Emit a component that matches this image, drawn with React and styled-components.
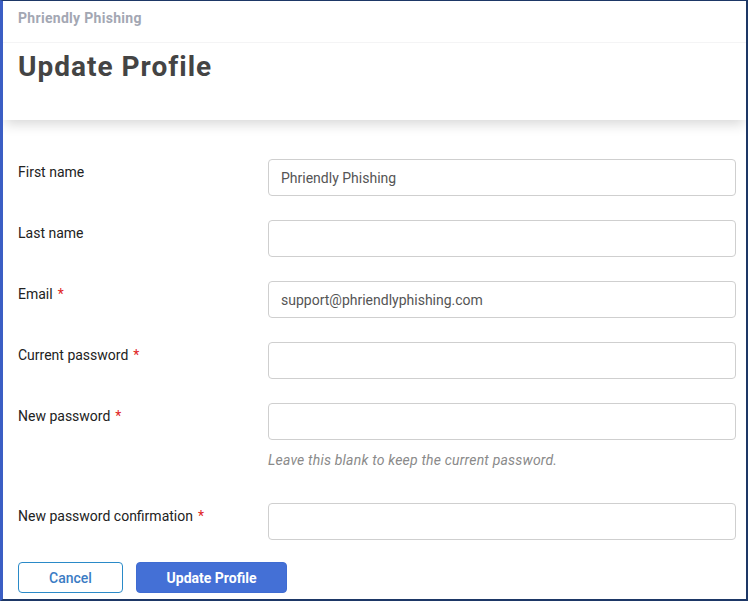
import React from 'react';
import styled, { createGlobalStyle } from 'styled-components';

const Global = createGlobalStyle`
  html, body {
    margin: 0;
    padding: 0;
    background: #fff;
  }
  * {
    box-sizing: border-box;
  }
`;

const Frame = styled.div`
  width: 748px;
  height: 601px;
  border-top: 1px solid #1d3766;
  border-left: 3px solid #3b5ec4;
  border-right: 2px solid #1d3766;
  border-bottom: 2px solid #1d3766;
  background: #fff;
  font-family: Roboto, 'Liberation Sans', sans-serif;
  overflow: hidden;
  display: flex;
  flex-direction: column;
`;

const Header = styled.header`
  position: relative;
  z-index: 1;
  background: #fff;
  box-shadow: 0 6px 12px -2px rgba(0, 0, 0, 0.16);
`;

const Brand = styled.div`
  height: 42px;
  padding: 9px 0 0 15px;
  font-size: 14px;
  font-weight: 700;
  letter-spacing: 0.3px;
  color: #a3a7b3;
  border-bottom: 1px solid #f4f4f5;
`;

const Title = styled.h1`
  margin: 0;
  height: 77px;
  padding: 8px 0 0 15px;
  font-size: 28px;
  line-height: 32px;
  font-weight: 700;
  letter-spacing: 1px;
  color: #444;
`;

const Form = styled.form`
  padding: 39px 10px 0 15px;
`;

const Row = styled.div`
  display: grid;
  grid-template-columns: 250px 1fr;
  margin-bottom: ${(p) => p.$gap || 24}px;
`;

const Label = styled.label`
  padding-top: 4px;
  font-size: 14px;
  line-height: 18px;
  color: #222;
`;

const Star = styled.span`
  color: #e02424;
  margin-left: 5px;
`;

const Field = styled.div`
  display: flex;
  flex-direction: column;
`;

const Input = styled.input`
  height: 37px;
  width: 100%;
  border: 1px solid #cfcfcf;
  border-radius: 4px;
  padding: 0 12px;
  font-family: inherit;
  font-size: 14px;
  color: #555;
  outline: none;
`;

const Help = styled.div`
  margin-top: 10px;
  font-size: 14px;
  line-height: 20px;
  font-style: italic;
  letter-spacing: 0.2px;
  color: #8a8a8a;
`;

const Actions = styled.div`
  display: flex;
  gap: 13px;
  margin-top: -2px;
`;

const Button = styled.button`
  height: 31px;
  width: ${(p) => p.$w}px;
  border-radius: 4px;
  font-family: inherit;
  font-size: 14px;
  font-weight: ${(p) => (p.$primary ? 700 : 500)};
  cursor: pointer;
  border: 1px solid ${(p) => (p.$primary ? '#3f6cd2' : '#2a8ac8')};
  background: ${(p) => (p.$primary ? '#4470d6' : '#fff')};
  color: ${(p) => (p.$primary ? '#fff' : '#3b7cc4')};
`;

const fields = [
  { label: 'First name', value: 'Phriendly Phishing' },
  { label: 'Last name', value: '' },
  { label: 'Email', value: 'support@phriendlyphishing.com', required: true },
  { label: 'Current password', value: '', required: true, type: 'password' },
  {
    label: 'New password',
    value: '',
    required: true,
    type: 'password',
    help: 'Leave this blank to keep the current password.',
    gap: 33,
  },
  { label: 'New password confirmation', value: '', required: true, type: 'password' },
];

export default function App() {
  return (
    <>
      <Global />
      <Frame>
        <Header>
          <Brand>Phriendly Phishing</Brand>
          <Title>Update Profile</Title>
        </Header>
        <Form onSubmit={(e) => e.preventDefault()}>
          {fields.map((f) => (
            <Row key={f.label} $gap={f.gap}>
              <Label>
                {f.label}
                {f.required && <Star>*</Star>}
              </Label>
              <Field>
                <Input type={f.type || 'text'} defaultValue={f.value} />
                {f.help && <Help>{f.help}</Help>}
              </Field>
            </Row>
          ))}
          <Actions>
            <Button type="button" $w={105}>Cancel</Button>
            <Button type="submit" $primary $w={151}>Update Profile</Button>
          </Actions>
        </Form>
      </Frame>
    </>
  );
}
